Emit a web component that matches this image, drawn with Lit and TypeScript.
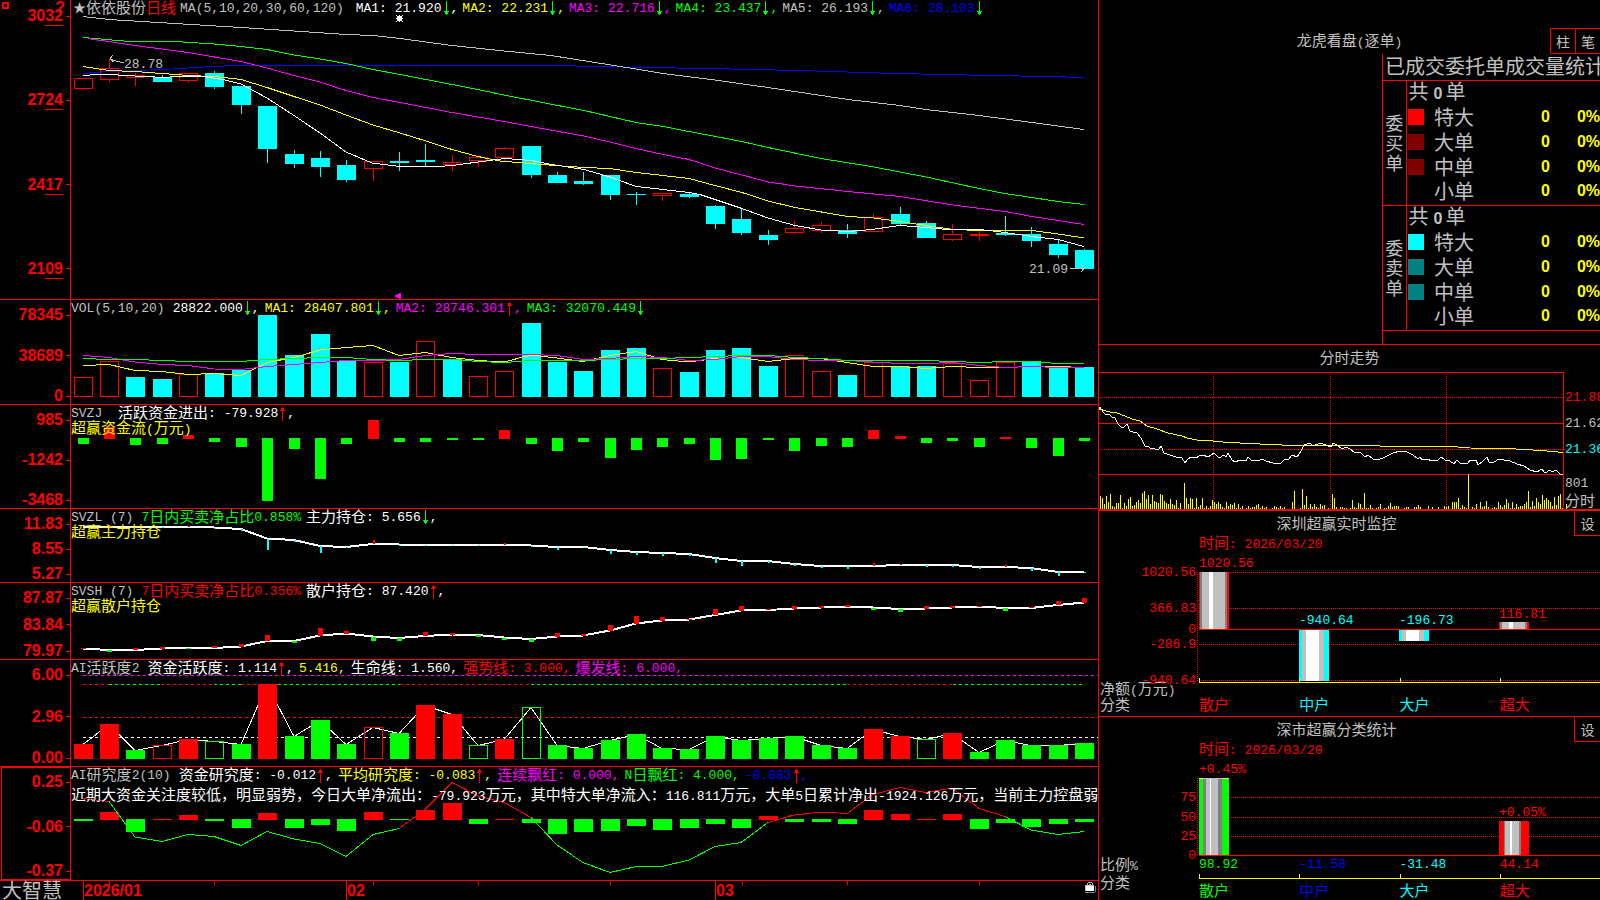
import { LitElement, html, svg, css, nothing } from "lit";
import { customElement } from "lit/decorators.js";

type Pt = [number, number];
type Item = { t: string; c: string; a?: "up" | "down"; end?: string };

const R = "#ff0000";
const G = "#00ff00";
const C = "#00ffff";
const Y = "#ffff00";
const M = "#ff00ff";
const W = "#ffffff";
const S = "#c0c0c0";
const B = "#0000ff";
const D = "#808080";

const cx = (i: number) => Math.floor(83.2 + 26.35 * i);
const span = (ys: number[]): Pt[] => ys.map((y, i) => [cx(i), y]);

/** Sets runs of Chinese text at their own size beside the monospaced figures. */
const mix = (t: string) =>
  t
    .split(/([\u3000-\u9fff\uff00-\uffef]+)/)
    .filter((s) => s)
    .map((s) => (/^[\u3000-\u9fff\uff00-\uffef]/.test(s) ? html`<span class="han">${s}</span>` : s));

const line = (pts: Pt[], color: string, width = 1) =>
  svg`<polyline points=${pts.map((p) => p.join(",")).join(" ")} fill="none" stroke=${color} stroke-width=${width}></polyline>`;
const flat = (pairs: number[]): Pt[] => {
  const out: Pt[] = [];
  for (let i = 0; i < pairs.length; i += 2) out.push([pairs[i], pairs[i + 1]]);
  return out;
};
const rect = (x: number, y: number, w: number, h: number, fill: string) =>
  svg`<rect x=${x} y=${y} width=${w} height=${h} fill=${fill}></rect>`;
const frame = (x: number, y: number, w: number, h: number, color: string) =>
  svg`<rect x=${x + 0.5} y=${y + 0.5} width=${w - 1} height=${Math.max(h - 1, 0.5)} fill="none" stroke=${color}></rect>`;
const seg = (x1: number, y1: number, x2: number, y2: number, color: string, dash = "") =>
  svg`<line x1=${x1} y1=${y1} x2=${x2} y2=${y2} stroke=${color} stroke-dasharray=${dash || nothing}></line>`;
const canvas = (x: number, y: number, w: number, h: number, body: unknown) =>
  html`<svg class="canvas" viewBox="${x} ${y} ${w} ${h}" preserveAspectRatio="none" shape-rendering="crispEdges" aria-hidden="true">${body}</svg>`;

const arrow = (dir: "up" | "down") => html`<svg class="arrow" viewBox="0 0 9 16" shape-rendering="crispEdges" aria-hidden="true">
  ${dir === "up"
    ? svg`<path d="M4 1h1v14h-1z M3 2h3v2h-3z M2 4h5v1h-5z" fill=${R}></path>`
    : svg`<path d="M4 0h1v14h-1z M3 10h3v3h-3z M2 10h5v1h-5z" fill=${G}></path>`}
</svg>`;
const legend = (items: Item[]) =>
  html`<div class="legend">${items.map(
    (i) => html`<span class="item" style="color:${i.c}">${mix(i.t)}${i.a ? arrow(i.a) : nothing}${i.end ?? ""}</span>`
  )}</div>`;

/* Daily candles: [rising, high, body top, body bottom, low] */
const candles: [number, number, number, number, number][] = [
  [1, 78, 78, 89, 90], [1, 59, 68, 80, 82], [1, 73, 75, 78, 86], [0, 75, 77, 82, 82], [1, 73, 73, 81, 83],
  [0, 71, 73, 87, 89], [0, 86, 86, 105, 114], [0, 106, 106, 149, 163], [0, 150, 154, 164, 168], [0, 151, 158, 167, 177],
  [0, 160, 165, 180, 182], [1, 161, 161, 169, 181], [0, 152, 161, 163, 171], [0, 144, 160, 162, 167], [1, 155, 162, 165, 171],
  [1, 155, 157, 161, 167], [1, 147, 148, 158, 162], [0, 146, 146, 175, 178], [0, 172, 175, 183, 183], [0, 172, 181, 184, 185],
  [0, 175, 175, 195, 200], [0, 192, 194, 195, 205], [1, 193, 193, 196, 201], [0, 192, 194, 197, 198], [0, 205, 206, 224, 229],
  [0, 209, 219, 233, 235], [0, 230, 235, 240, 245], [1, 221, 228, 233, 234], [1, 222, 225, 231, 233], [0, 224, 230, 234, 238],
  [1, 214, 217, 232, 232], [0, 207, 214, 224, 225], [0, 221, 223, 238, 238], [1, 224, 234, 240, 241], [1, 230, 234, 236, 241],
  [0, 216, 233, 235, 236], [0, 227, 234, 241, 247], [0, 240, 244, 255, 258], [0, 249, 250, 269, 269],
];
const ma5 = [83, 75.5, 98, 74.5, 109, 74.5, 135, 76, 165, 77.5, 180, 76, 201, 76, 225, 80, 241, 84, 267, 98, 294, 115.5, 320, 133, 346, 152, 372, 163, 400, 166.5, 438, 166.5, 452, 165.5, 478, 162, 505, 158.5, 531, 160.5, 552, 164.5, 584, 169.5, 610, 177, 636, 186.5, 663, 189.5, 689, 192.5, 700, 194.5, 742, 208.5, 768, 218, 795, 225.5, 821, 230, 848, 231.5, 872, 229.5, 900, 225.5, 926, 227.5, 947, 229.5, 980, 229.5, 1005, 232.5, 1032, 236.5, 1058, 239.5, 1084, 246.5];
const ma10 = [83, 66.5, 109, 70.5, 135, 71.5, 162, 73.5, 188, 75.5, 214, 76.5, 241, 79.5, 267, 87.5, 294, 96.5, 320, 105, 346, 115, 373, 125, 400, 133, 426, 141, 452, 149.5, 478, 156.5, 500, 161, 531, 163.5, 555, 165.5, 584, 167.5, 610, 168.5, 636, 172.5, 663, 175.5, 689, 178.5, 715, 185.5, 742, 192.5, 768, 201, 795, 207.5, 848, 216.5, 874, 218, 900, 221.5, 926, 225.5, 953, 229.5, 980, 230.5, 1032, 230.5, 1058, 234, 1084, 238];
const ma20 = [88, 38.5, 135, 45.5, 188, 52.5, 241, 61.5, 267, 68, 294, 75.5, 320, 82, 346, 90.5, 373, 97.5, 400, 102.5, 452, 112.5, 504, 121.5, 550, 130, 584, 136, 610, 142, 636, 148.5, 663, 154.5, 689, 159.5, 715, 168, 742, 175, 768, 182, 795, 186, 848, 191.5, 900, 196.5, 953, 205, 1005, 211.5, 1032, 216.5, 1084, 224.5];
const ma30 = [83, 37.5, 130, 41.5, 175, 41.5, 214, 44, 241, 46.5, 267, 49.5, 294, 55, 320, 59, 346, 63.5, 373, 69.5, 400, 74.5, 426, 79.5, 478, 89.5, 504, 95, 550, 104, 584, 110.5, 636, 122.5, 663, 126.5, 689, 131.5, 742, 141.5, 768, 147.5, 821, 158.5, 874, 167, 926, 177, 979, 188.5, 1005, 193.5, 1058, 201.5, 1084, 204.5];
const ma60 = [83, 16.5, 109, 19.5, 241, 27.5, 346, 34.5, 373, 35.5, 400, 38.5, 452, 45.5, 504, 51, 551, 55.5, 636, 69, 663, 73.5, 715, 80, 768, 87.5, 848, 99.5, 900, 105.5, 926, 109.5, 979, 115.5, 1032, 122.5, 1084, 129.5];
const ma120 = [83, 73.5, 109, 71.5, 162, 69.5, 214, 66.5, 235, 65.5, 551, 65.5, 650, 67.5, 704, 68.5, 755, 69.5, 834, 71.5, 860, 72.5, 940, 74.5, 1047, 76.5, 1084, 77.5];

/* Trading volume: [hollow, top] */
const volume: [number, number][] = [
  [1, 377], [1, 361], [0, 377], [0, 379], [1, 374], [0, 373], [0, 370], [0, 315], [0, 355], [0, 334], [0, 361], [1, 362], [0, 362],
  [1, 341], [0, 359], [1, 376], [1, 371], [0, 323], [0, 362], [0, 371], [0, 350], [0, 348], [1, 368], [0, 372], [0, 350], [0, 348],
  [0, 366], [1, 355], [1, 371], [0, 375], [1, 362], [0, 366], [0, 366], [1, 363], [1, 380], [1, 362], [0, 361], [0, 368], [0, 367],
];
const vol5 = [365.5, 364.5, 370.5, 371.5, 374.5, 373.5, 375.5, 362.5, 357.5, 350, 347.5, 345.5, 355.5, 352.5, 357.5, 360.5, 362, 355, 358, 361.5, 355.5, 351.5, 359.5, 362, 358.5, 357.5, 361.5, 358.5, 358.5, 362.5, 366.5, 366.5, 368.5, 366.5, 367.5, 367.5, 366.5, 366.5, 367.5];
const vol10 = [355.5, 357.5, 362, 364.5, 365.5, 369, 369.5, 366.5, 364.5, 362.5, 360.5, 360.5, 359.5, 355.5, 353.5, 354.5, 354.5, 354.5, 355.5, 359.5, 358.5, 356.5, 357.5, 360.5, 359.5, 356.5, 356.5, 359.5, 360.5, 360.5, 362, 363.5, 363.5, 362.5, 365.5, 367.5, 366.5, 367.5, 367.5];
const vol20 = [358.5, 359.5, 359.5, 360.5, 361.5, 361.5, 361.5, 359.5, 358.5, 357.5, 357.5, 359.5, 360.5, 359.5, 359.5, 361.5, 362.5, 360.5, 360.5, 360.5, 359.5, 358.5, 358.5, 357.5, 356.5, 355.5, 355.5, 357.5, 358.5, 360.5, 360.5, 360.5, 360.5, 361.5, 362.5, 361.5, 361.5, 363.5, 363.5];

/* Capital flow: positive is inflow, in pixels from the zero line */
const flow = [-6, 12, -7, -6, 4, -4, -9, -63, -11, -41, -6, 19, -4, -4, -2, -2, 9, -6, -13, -4, -20, -12, -9, -6, -22, -21, -2, -13, -8, -9, 9, 3, -5, -3, -9, 2, -10, -18, -3];

const mainHold = [527, 527, 527, 527, 527, 527.5, 529, 538.5, 540, 546, 547, 544, 544.5, 545, 545, 545, 545, 545.5, 547, 547, 550, 552, 553, 554, 558, 561, 561, 564, 566, 566, 566, 565, 565, 565, 567, 567, 568, 572, 572];
const mainTick = [0, 2, 0, -1, 1, -1, -2, -11, -2, -7, -1, 4, -1, -1, -1, -1, 2, -1, -3, -1, -4, -3, -3, -2, -5, -5, -2, -2, -2, -3, 3, 1, -2, -2, -2, 2, -3, -4, -1];
const retail = [648.5, 650, 650, 648.5, 648, 648, 646.5, 641, 641, 635.5, 633.5, 636.5, 638, 636, 634.5, 635, 637.5, 639, 636.5, 635.5, 630.5, 623.5, 620.5, 619.5, 615, 610.5, 610, 608.5, 607.5, 606.5, 607.5, 609, 608.5, 607.5, 606.5, 608, 608, 605, 602.5];
const retailTick = [1, -2, 2, 2, -1, 2, 3, 6, -2, 8, 3, -4, -3, 4, 2, -2, -2, -3, 4, 2, 6, 8, 4, 1, 6, 5, 1, 3, 2, 2, -2, -3, 3, 2, 1, -3, 1, 4, 5];

/* Activity: kind (R/G solid, r/g hollow) and top */
const active: [string, number][] = [
  ["R", 744], ["R", 724], ["G", 750], ["r", 745], ["R", 739], ["g", 741], ["G", 744], ["R", 684], ["G", 736], ["G", 720],
  ["G", 744], ["r", 727], ["G", 733], ["R", 705], ["R", 714], ["g", 745], ["R", 739], ["g", 707], ["G", 745], ["G", 748],
  ["G", 740], ["G", 734], ["G", 748], ["G", 749], ["G", 736], ["G", 740], ["G", 738], ["G", 736], ["G", 745], ["G", 748],
  ["R", 729], ["R", 736], ["g", 739], ["R", 733], ["G", 752], ["G", 740], ["G", 745], ["G", 745], ["G", 743],
];
const study = [798.5, 801.5, 837, 841.5, 834.5, 836.5, 845.5, 831.5, 839, 843.5, 856.5, 834.5, 828.5, 809.5, 782.5, 796, 802.5, 817.5, 845, 862.5, 872.5, 866.5, 866.5, 860, 846.5, 842.5, 822.5, 815, 812, 813.5, 794.5, 787.5, 792.5, 788, 808.5, 816.5, 830, 834.5, 831.5];
const studyBars = [-2, 8, -13, 1, 5, -2, -9, 7, -9, -6, -12, 8, -1, 10, 17, -5, 1, -4, -15, -13, -12, -7, -11, -9, -5, -9, 4, -3, -3, -5, 10, 6, 1, 6, -10, -4, -8, -5, -3];

const minuteAvg = [1099, 409, 1110, 412, 1117, 413, 1125, 416, 1132, 419, 1140, 421, 1147, 426, 1157, 429, 1168, 433, 1182, 436, 1187, 438, 1197, 440, 1213, 441, 1223, 442, 1240, 443, 1270, 444.5, 1293, 445.5, 1380, 446, 1452, 446.5, 1470, 448, 1507, 448.5, 1533, 450, 1547, 451, 1563, 452.5];
const minutePrice = [1099, 409, 1100, 407, 1103, 412, 1106, 415, 1109, 414, 1112, 417, 1115, 418, 1118, 424, 1121, 427, 1124, 427, 1127, 424, 1130, 431, 1133, 432, 1137, 433, 1141, 438, 1145, 446, 1149, 447, 1151, 449, 1153, 448, 1157, 450, 1159, 449, 1161, 446, 1164, 453, 1170, 455, 1176, 457, 1182, 458, 1185, 463, 1188, 459, 1191, 457, 1196, 458, 1199, 456, 1203, 455, 1208, 457, 1214, 453, 1219, 458, 1224, 455, 1226, 457, 1228, 453, 1232, 460, 1235, 462, 1240, 460, 1246, 461, 1248, 457, 1251, 460, 1258, 461, 1262, 459, 1266, 461, 1273, 463, 1280, 464, 1284, 460, 1289, 459, 1292, 455, 1297, 457, 1301, 451, 1304, 445, 1307, 444, 1310, 443, 1313, 446, 1320, 443, 1326, 445, 1331, 447, 1333, 443, 1337, 445, 1342, 449, 1346, 447, 1350, 449, 1354, 452, 1361, 453, 1365, 457, 1368, 455, 1373, 459, 1378, 460, 1385, 457, 1393, 453, 1400, 451, 1407, 452, 1413, 455, 1418, 459, 1420, 457, 1422, 460, 1428, 459, 1431, 461, 1438, 460, 1441, 457, 1445, 460, 1450, 461, 1454, 464, 1457, 460, 1461, 464, 1468, 463, 1470, 460, 1476, 460, 1478, 465, 1483, 461, 1487, 457, 1489, 462, 1494, 462, 1499, 459, 1504, 460, 1510, 461, 1517, 464, 1524, 466, 1530, 470, 1537, 472, 1542, 469, 1545, 473, 1550, 470, 1552, 472, 1556, 470, 1560, 474, 1563, 474];
const minuteVol = [13, 11, 5, 13, 7, 15, 3, 2, 6, 6, 14, 1, 6, 3, 10, 12, 3, 4, 7, 9, 6, 16, 18, 10, 14, 5, 14, 8, 7, 6, 15, 14, 8, 6, 5, 10, 5, 4, 9, 1, 6, 0, 26, 11, 5, 11, 10, 1, 11, 2, 4, 11, 1, 3, 1, 3, 9, 7, 5, 7, 5, 2, 1, 7, 3, 5, 4, 6, 1, 5, 1, 3, 0, 1, 3, 1, 2, 2, 4, 5, 1, 3, 1, 2, 0, 0, 1, 3, 2, 1, 3, 1, 2, 0, 0, 0, 7, 18, 0, 0, 1, 20, 4, 13, 1, 5, 2, 5, 2, 1, 5, 3, 4, 0, 1, 0, 15, 11, 2, 0, 2, 2, 1, 1, 0, 1, 9, 2, 1, 6, 5, 1, 16, 1, 1, 4, 1, 0, 1, 2, 5, 0, 1, 1, 3, 6, 2, 3, 3, 3, 0, 0, 1, 2, 2, 0, 0, 2, 2, 4, 2, 0, 0, 0, 3, 0, 2, 0, 0, 2, 0, 0, 3, 2, 3, 0, 7, 7, 7, 11, 1, 4, 2, 1, 35, 0, 2, 1, 5, 0, 7, 2, 3, 8, 2, 0, 1, 2, 1, 7, 4, 2, 4, 10, 6, 1, 7, 1, 5, 2, 3, 3, 5, 7, 18, 2, 8, 3, 11, 7, 5, 14, 9, 11, 9, 7, 3, 12, 4, 13, 15, 1, 0, 5];

/** A shaded column: stripes of [width, colour] from the left edge. */
const column = (x: number, y: number, h: number, stripes: [number, string][]) => {
  let at = x;
  return stripes.map(([w, c]) => {
    const s = rect(at, y, w, h, c);
    at += w;
    return s;
  });
};

type Label = { x: number; y: number; t: string; c: string; right?: boolean };

@customElement("app-root")
export class AppRoot extends LitElement {
  static styles = css`
    :host {
      display: block;
      height: 100vh;
      overflow: hidden;
      background: #000;
      color: #c0c0c0;
      font: 13px/16px "Liberation Mono", "Noto Sans CJK SC", monospace;
      white-space: nowrap;
    }
    * {
      box-sizing: border-box;
    }
    .screen {
      display: grid;
      grid-template-columns: minmax(0, 1098fr) minmax(0, 502fr);
      height: 100%;
    }
    .han {
      font-family: "Noto Sans CJK SC", sans-serif;
      font-size: 15px;
      line-height: 0;
    }
    .charts {
      display: grid;
      grid-template-rows:
        minmax(0, 300fr) minmax(0, 105fr) minmax(0, 104fr) minmax(0, 74fr) minmax(0, 77fr)
        minmax(0, 107fr) minmax(0, 114fr) minmax(0, 19fr);
    }
    .panel {
      display: grid;
      grid-template-columns: 71px minmax(0, 1fr);
      border-bottom: 1px solid #f00;
    }
    .axis {
      position: relative;
      display: flex;
      flex-direction: column;
      justify-content: space-between;
      border-right: 1px solid #f00;
      color: #f00;
      font: bold 16px/16px "Liberation Sans", sans-serif;
      text-align: right;
    }
    .axis.price {
      padding: 8px 0 22px;
    }
    .axis.vol,
    .axis.money,
    .axis.retail,
    .axis.hold,
    .axis.act {
      padding: 7px 0 0;
    }
    .axis.study {
      margin-left: 1px;
      padding: 6px 0 0;
      border: 1px solid #f00;
    }
    .mark {
      display: grid;
      grid-template-columns: 1fr 4px;
      column-gap: 3px;
      align-items: center;
    }
    .mark::after {
      content: "";
      height: 1px;
      background: #f00;
    }
    .price .mark span {
      position: relative;
    }
    .price .mark span::after {
      content: "";
      position: absolute;
      right: 0;
      top: 17px;
      width: 18px;
      height: 1px;
      background: #f00;
    }
    .help {
      position: absolute;
      right: 5px;
      top: 0;
    }
    .box {
      position: absolute;
      left: 2px;
      top: 2px;
      width: 7px;
      height: 7px;
      border: 2px solid #f00;
    }
    .plot {
      position: relative;
      overflow: hidden;
    }
    .canvas {
      position: absolute;
      inset: 0;
      width: 100%;
      height: 100%;
      display: block;
    }
    .legend {
      position: relative;
      display: flex;
      gap: 5px;
      height: 17px;
      padding-top: 1px;
    }
    .legend .item:first-child {
      margin-right: 3px;
    }
    .legend.first {
      gap: 4px;
      padding-left: 2px;
    }
    .legend.first .item:first-child {
      margin-right: 0;
    }
    .legend .han {
      margin-bottom: 4px;
    }
    .item {
      display: inline-flex;
      align-items: center;
      height: 16px;
      white-space: pre;
    }
    .note {
      position: relative;
      color: #ff0;
    }
    .comment {
      position: relative;
      margin-top: 5px;
      color: #fff;
    }
    .arrow {
      width: 9px;
      height: 16px;
    }
    .tag {
      position: absolute;
      line-height: 16px;
      margin-top: -8px;
      white-space: pre;
    }
    .tag.right {
      transform: translateX(-100%);
    }
    .footer {
      display: grid;
      grid-template-columns: 71px minmax(0, 1fr);
    }
    .brand {
      padding-left: 2px;
      font: 20px/18px "Noto Sans CJK SC", sans-serif;
    }
    .dates {
      position: relative;
      color: #f00;
    }
    .date {
      position: absolute;
      top: 2px;
      font: bold 16px/16px "Liberation Sans", sans-serif;
    }
    .lock {
      position: absolute;
      right: 2px;
      top: 0;
      width: 11px;
      height: 12px;
    }
    .side {
      display: grid;
      grid-template-rows: minmax(0, 345fr) minmax(0, 166fr) minmax(0, 206fr) minmax(0, 183fr);
      border-left: 1px solid #f00;
      overflow: hidden;
    }
    .card {
      display: flex;
      flex-direction: column;
      min-width: 0;
      overflow: hidden;
      border-bottom: 1px solid #f00;
    }
    .card:last-child {
      border-bottom: 0;
    }
    .head {
      display: flex;
      height: 25px;
      flex: none;
    }
    .head h2 {
      flex: 1;
      margin: 0;
      text-align: center;
      font: inherit;
      line-height: 30px;
    }
    .tool {
      width: 26px;
      padding: 0;
      border: 1px solid #f00;
      border-top: 0;
      border-right: 0;
      background: #000;
      color: inherit;
      font: 14px/16px "Noto Sans CJK SC", sans-serif;
    }
    .orders {
      padding-top: 28px;
    }
    .orders .head {
      position: relative;
      height: 26px;
    }
    .tools {
      position: absolute;
      right: 0;
      top: 0;
      display: flex;
      height: 26px;
    }
    .tools .tool {
      width: 25px;
      border-top: 1px solid #f00;
    }
    .stats {
      flex: 1;
      align-self: flex-end;
      width: 218px;
      border-left: 1px solid #f00;
      overflow: hidden;
    }
    .stats h3 {
      margin: 0;
      height: 26px;
      padding-left: 2px;
      font: 20px/24px "Noto Sans CJK SC", sans-serif;
    }
    table {
      width: 100%;
      table-layout: fixed;
      border-collapse: collapse;
      font: 20px/20px "Noto Sans CJK SC", sans-serif;
    }
    tbody {
      border-top: 1px solid #f00;
      border-bottom: 1px solid #f00;
    }
    tr {
      height: 25px;
    }
    td,
    th {
      padding: 0 0 3px;
      font-weight: 400;
      text-align: left;
    }
    .kind {
      border-right: 1px solid #f00;
      font-size: 18px;
      line-height: 20px;
      text-align: center;
      white-space: normal;
    }
    .c-kind {
      width: 23px;
    }
    .c-swatch {
      width: 28px;
    }
    .c-num {
      width: 51px;
    }
    .c-pct {
      width: 50px;
    }
    .total {
      padding-left: 2px;
    }
    .total b,
    .num {
      font: bold 16px/16px "Liberation Sans", sans-serif;
    }
    .total b {
      margin: 0 3px 0 5px;
    }
    .num {
      color: #ff0;
      text-align: right;
    }
    .swatch {
      width: 16px;
      height: 16px;
      margin-left: 1px;
    }
    .minute {
      position: relative;
      flex: 1;
    }
    .when {
      height: 16px;
      margin-left: 100px;
      color: #f00;
      line-height: 18px;
      flex: none;
    }
    .bars {
      position: relative;
      flex: 1;
    }
    .cats {
      display: grid;
      grid-template-columns: 100px repeat(4, minmax(0, 1fr));
      flex: none;
    }
    .names {
      display: flex;
      flex-direction: column;
      line-height: 16px;
      padding: 1px 0 0 1px;
    }
    .name {
      padding: 2px 0 0 1px;
    }
    .cat {
      position: relative;
      height: 34px;
      padding-top: 16px;
      border-top: 1px solid #ff0;
    }
    .short .cat {
      height: 22px;
      margin-top: 3px;
      padding-top: 6px;
    }
    .cat::before {
      content: "";
      position: absolute;
      left: 0;
      top: -5px;
      width: 1px;
      height: 4px;
      background: #ff0;
    }
  `;

  private axis(kind: string, values: string[], extra: unknown = nothing) {
    return html`<div class="axis ${kind}">${extra}${values.map((v) => html`<div class="mark"><span>${v}</span></div>`)}</div>`;
  }

  private labels(box: [number, number, number, number], list: Label[]) {
    const [x, y, w, h] = box;
    return list.map(
      (l) => html`<span
        class="tag ${l.right ? "right" : ""}"
        style="left:${((l.x - x) / w) * 100}%;top:${((l.y - y) / h) * 100}%;color:${l.c}"
        >${mix(l.t)}</span
      >`
    );
  }

  private pricePlot() {
    return canvas(71, 0, 1027, 299, [
      candles.map(([up, hi, top, bot, lo], i) => {
        const x = cx(i);
        const h = Math.max(bot - top, 1);
        return up
          ? [
              hi < top ? rect(x, hi, 1, top - hi, R) : nothing,
              lo > bot ? rect(x, bot, 1, lo - bot, R) : nothing,
              h > 2 ? frame(x - 9, top, 19, h, R) : rect(x - 9, top, 19, h, R),
            ]
          : [rect(x, hi, 1, lo - hi, C), rect(x - 9, top, 19, h, C)];
      }),
      line(flat(ma120), B),
      line(flat(ma60), S),
      line(flat(ma30), G),
      line(flat(ma20), M),
      line(flat(ma10), Y),
      line(flat(ma5), W),
      line(flat([124, 63, 116, 61, 110, 59]), S),
      line(flat([113, 55, 110, 59, 114, 62]), S),
      line(flat([1070, 268.5, 1084, 268.5]), S),
      line(flat([1081, 264, 1084, 268.5, 1081, 272]), S),
      svg`<path d="M397 16h5v5h-5z M396 15h1v1h-1z M402 15h1v1h-1z M396 21h1v1h-1z M402 21h1v1h-1z M399 15h1v7h-1z M396 18h7v1h-7z" fill=${W}></path>`,
      svg`<path d="M395 295h2v-1h2v-1h2v6h-2v-1h-2v-1h-2z" fill=${M}></path>`,
    ]);
  }

  private shaded: [number, string][] = [[1, R], [2, D], [7, S], [4, W], [12, S], [2, D], [2, R]];
  private cyanBar: [number, string][] = [[3, C], [4, S], [13, W], [5, S], [5, C]];

  private group(kind: string, colors: string[]) {
    const names = ["特大", "大单", "中单", "小单"];
    return html`<tbody>
      <tr>
        <th class="kind" rowspan="5" scope="rowgroup">${kind}</th>
        <td class="total" colspan="4">共<b>0</b>单</td>
      </tr>
      ${names.map(
        (n, i) => html`<tr>
          <td><div class="swatch" style="background:${colors[i]}"></div></td>
          <td>${n}</td>
          <td class="num">0</td>
          <td class="num">0%</td>
        </tr>`
      )}
    </tbody>`;
  }

  render() {
    const studyParts: [number, number, string][] = [[0, 1, R], [1, 12, G], [12, 17, R], [17, 26, G], [26, 35, R], [35, 38, G]];
    const dashParts: [number, number, string][] = [[83, 109, R], [109, 161, G], [161, 214, R], [214, 241, G], [241, 278, R], [278, 400, G], [400, 531, R], [531, 847, G], [847, 953, R], [953, 1084, G]];
    const minuteBox: [number, number, number, number] = [1099, 370, 501, 140];
    const netBox: [number, number, number, number] = [1099, 552, 501, 130];
    const ratioBox: [number, number, number, number] = [1099, 758, 501, 99];
    return html`<main class="screen">
      <section class="charts">
        <div class="panel">
          ${this.axis("price", ["3032", "2724", "2417", "2109"], html`<i class="box"></i><span class="help">?</span>`)}
          <div class="plot">
            ${this.pricePlot()}
            ${this.labels([71, 0, 1027, 299], [
              { x: 124, y: 65, t: "28.78", c: S },
              { x: 1029, y: 270, t: "21.09", c: S },
            ])}
            <div class="legend first">
              <span class="item">★${mix("依依股份")}<span class="item" style="color:${R}">${mix("日线")}</span></span>
              <span class="item">MA(5,10,20,30,60,120)&nbsp;</span>
              ${[
                ["MA1: 21.920", W], ["MA2: 22.231", Y], ["MA3: 22.716", M], ["MA4: 23.437", G], ["MA5: 26.193", S], ["MA6: 28.103", B],
              ].map(([t, c], i) => html`<span class="item" style="color:${c}">${t}${arrow("down")}${i < 5 ? "," : ""}</span>`)}
            </div>
          </div>
        </div>

        <div class="panel">
          ${this.axis("vol", ["78345", "38689", "0"])}
          <div class="plot">
            ${canvas(71, 300, 1027, 104, [
              volume.map(([hollow, top], i) =>
                hollow ? frame(cx(i) - 9, top, 19, 397 - top, R) : rect(cx(i) - 9, top, 19, 397 - top, C)
              ),
              line(span(vol5), Y),
              line(span(vol10), M),
              line(span(vol20), G),
            ])}
            ${legend([
              { t: "VOL(5,10,20)", c: S },
              { t: "28822.000", c: W, a: "down", end: "," },
              { t: "MA1: 28407.801", c: Y, a: "down", end: "," },
              { t: "MA2: 28746.301", c: M, a: "up", end: "," },
              { t: "MA3: 32070.449", c: G, a: "down" },
            ])}
          </div>
        </div>

        <div class="panel">
          ${this.axis("money", ["985", "-1242", "-3468"])}
          <div class="plot">
            ${canvas(71, 405, 1027, 103, flow.map((v, i) => (v > 0 ? rect(cx(i) - 5, 439 - v, 11, v, R) : rect(cx(i) - 5, 438, 11, -v, G))))}
            ${legend([
              { t: "SVZJ ", c: S },
              { t: "活跃资金进出: -79.928", c: W, a: "up", end: "," },
            ])}
            <div class="note">${mix("超赢资金流(万元)")}</div>
          </div>
        </div>

        <div class="panel">
          ${this.axis("hold", ["11.83", "8.55", "5.27"])}
          <div class="plot">
            ${canvas(71, 509, 1027, 73, [
              line(span(mainHold), W, 2),
              mainTick.map((v, i) => (v > 0 ? rect(cx(i), mainHold[i] - v, 2, v, R) : rect(cx(i), mainHold[i], 2, -v, C))),
            ])}
            ${legend([
              { t: "SVZL (7)", c: S },
              { t: "7日内买卖净占比0.858%", c: G },
              { t: "主力持仓: 5.656", c: W, a: "down", end: "," },
            ])}
            <div class="note">${mix("超赢主力持仓")}</div>
          </div>
        </div>

        <div class="panel">
          ${this.axis("retail", ["87.87", "83.84", "79.97"])}
          <div class="plot">
            ${canvas(71, 583, 1027, 76, [
              line(span(retail), W, 2),
              retailTick.map((v, i) => (v > 0 ? rect(cx(i) - 2, retail[i] - v, 5, v, R) : rect(cx(i) - 2, retail[i], 5, -v, G))),
            ])}
            ${legend([
              { t: "SVSH (7)", c: S },
              { t: "7日内买卖净占比0.356%", c: R },
              { t: "散户持仓: 87.420", c: W, a: "up", end: "," },
            ])}
            <div class="note">${mix("超赢散户持仓")}</div>
          </div>
        </div>

        <div class="panel">
          ${this.axis("act", ["6.00", "2.96", "0.00"])}
          <div class="plot">
            ${canvas(71, 660, 1027, 106, [
              seg(83, 675.5, 1098, 675.5, M, "3 3"),
              dashParts.map(([a, b, c]) => seg(a, 684.5, b, 684.5, c, "3 3")),
              seg(83, 717.5, 1098, 717.5, R, "3 3"),
              seg(83, 737.5, 1098, 737.5, W, "3 3"),
              line(span(active.map(([, y]) => y + 0.5)), W),
              active.map(([k, top], i) => {
                const c = k.toLowerCase() === "r" ? R : G;
                return k === k.toLowerCase() ? frame(cx(i) - 9, top, 19, 759 - top, c) : rect(cx(i) - 9, top, 19, 759 - top, c);
              }),
            ])}
            ${legend([
              { t: "AI活跃度2", c: S },
              { t: "资金活跃度: 1.114", c: W, a: "up", end: "," },
              { t: "5.416,", c: Y },
              { t: "生命线: 1.560,", c: W },
              { t: "强势线: 3.000,", c: R },
              { t: "爆发线: 6.000,", c: M },
            ])}
          </div>
        </div>

        <div class="panel">
          ${this.axis("study", ["0.25", "-0.06", "-0.37"])}
          <div class="plot">
            ${canvas(71, 767, 1027, 113, [
              studyBars.map((v, i) => (v > 0 ? rect(cx(i) - 9, 820 - v, 19, v, R) : rect(cx(i) - 9, 819, 19, -v, G))),
              studyParts.map(([a, b, c]) => line(span(study).slice(a, b + 1), c)),
            ])}
            ${legend([
              { t: "AI研究度2(10)", c: S },
              { t: "资金研究度: -0.012", c: W, a: "up", end: "," },
              { t: "平均研究度: -0.083", c: Y, a: "up", end: "," },
              { t: "连续飘红: 0.000,", c: M },
              { t: "N日飘红: 4.000,", c: G },
              { t: "-0.083", c: B, a: "up", end: "," },
            ])}
            <div class="comment">${mix("近期大资金关注度较低，明显弱势，今日大单净流出：-79.923万元，其中特大单净流入：116.811万元，大单5日累计净出-1924.126万元，当前主力控盘弱")}</div>
          </div>
        </div>

        <div class="footer">
          <div class="brand">大智慧</div>
          <div class="dates">
            ${canvas(71, 881, 1027, 19, [
              [83, 346, 715].map((x) => rect(x, 881, 1, 19, R)),
              [109, 214, 373, 478, 610, 742, 847, 979].map((x) => rect(x, 881, 1, 4, R)),
            ])}
            ${([[84, "2026/01"], [347, "02"], [716, "03"]] as [number, string][]).map(
              ([x, t]) => html`<span class="date" style="left:${((x - 71) / 1027) * 100}%">${t}</span>`
            )}
            <svg class="lock" viewBox="0 0 11 12" shape-rendering="crispEdges" aria-hidden="true">
              <path d="M3 1h4v1h-4z M2 2h1v2h-1z M7 2h1v2h-1z M4 3h2v1h-2z" fill="#c0c0c0"></path>
              <path d="M1 5h8v5h-8z" fill="#fff"></path>
              <path d="M0 4h9v1h-9z M0 5h1v5h-1z" fill="#c0c0c0"></path>
              <path d="M0 11h10v1h-10z M10 5h1v6h-1z" fill="#808080"></path>
            </svg>
          </div>
        </div>
      </section>

      <aside class="side">
        <section class="card orders">
          <div class="head">
            <h2>${mix("龙虎看盘(逐单)")}</h2>
            <div class="tools"><button class="tool">柱</button><button class="tool">笔</button></div>
          </div>
          <div class="stats">
            <h3>已成交委托单成交量统计</h3>
            <table>
              <colgroup>
                <col class="c-kind" />
                <col class="c-swatch" />
                <col />
                <col class="c-num" />
                <col class="c-pct" />
              </colgroup>
              ${this.group("委买单", ["#ff0000", "#800000", "#800000", "#000000"])}
              ${this.group("委卖单", ["#00ffff", "#008080", "#008080", "#000000"])}
            </table>
          </div>
        </section>

        <section class="card">
          <div class="head"><h2>${mix("分时走势")}</h2></div>
          <div class="minute">
            ${canvas(...minuteBox, [
              rect(1099, 372, 465, 1, R),
              rect(1099, 423, 465, 1, R),
              rect(1099, 474, 465, 1, R),
              rect(1563, 372, 1, 138, R),
              rect(1099, 509, 501, 1, R),
              seg(1100, 397.5, 1563, 397.5, R, "1 1"),
              seg(1100, 449.5, 1563, 449.5, R, "1 1"),
              [1213.5, 1330.5, 1446.5].map((x) => seg(x, 374, x, 509, R, "1 1")),
              minuteVol.map((v, i) => (v ? rect(1100 + 2 * i, 509 - v, 1, v, Y) : nothing)),
              line(flat(minuteAvg), Y),
              line(flat(minutePrice), W),
            ])}
            ${this.labels(minuteBox, [
              { x: 1565, y: 398, t: "21.88", c: R },
              { x: 1565, y: 424, t: "21.62", c: S },
              { x: 1565, y: 450, t: "21.36", c: C },
              { x: 1565, y: 484, t: "801", c: S },
              { x: 1565, y: 503, t: "分时", c: S },
            ])}
          </div>
        </section>

        <section class="card">
          <div class="head">
            <h2>${mix("深圳超赢实时监控")}</h2>
            <button class="tool">设</button>
          </div>
          <div class="when">${mix("时间: 2026/03/20")}</div>
          <div class="bars">
            ${canvas(...netBox, [
              [572.5, 608.5, 644.5, 680.5].map((y) => seg(1199, y, 1600, y, R, "1 1")),
              seg(1197.5, 572, 1197.5, 681, R, "1 1"),
              rect(1199, 629, 401, 1, R),
              column(1199, 572, 57, this.shaded),
              column(1299, 630, 51, this.cyanBar),
              column(1399, 630, 11, this.cyanBar),
              column(1499, 622, 7, this.shaded),
            ])}
            ${this.labels(netBox, [
              { x: 1196, y: 573, t: "1020.56", c: R, right: true },
              { x: 1196, y: 609, t: "366.83", c: R, right: true },
              { x: 1196, y: 630, t: "0", c: R, right: true },
              { x: 1196, y: 645, t: "-286.9", c: R, right: true },
              { x: 1196, y: 681, t: "-940.64", c: R, right: true },
              { x: 1199, y: 564, t: "1020.56", c: R },
              { x: 1299, y: 621, t: "-940.64", c: C },
              { x: 1399, y: 621, t: "-196.73", c: C },
              { x: 1499, y: 615, t: "116.81", c: R },
            ])}
          </div>
          <div class="cats">
            <div class="names"><span>${mix("净额(万元)")}</span><span>${mix("分类")}</span></div>
            ${[["散户", R], ["中户", C], ["大户", C], ["超大", R]].map(([t, c]) => html`<div class="cat" style="color:${c}">${mix(t)}</div>`)}
          </div>
        </section>

        <section class="card">
          <div class="head">
            <h2>${mix("深市超赢分类统计")}</h2>
            <button class="tool">设</button>
          </div>
          <div class="when">${mix("时间: 2026/03/20")}</div>
          <div class="bars">
            ${canvas(...ratioBox, [
              [797.5, 817.5, 836.5].map((y) => seg(1199, y, 1600, y, R, "1 1")),
              seg(1197.5, 778, 1197.5, 856, R, "1 1"),
              column(1199, 778, 77, [[4, G], [3, D], [4, S], [1, W], [7, S], [4, D], [7, G]]),
              rect(1199, 778, 4, 1, Y),
              rect(1203, 778, 20, 1, S),
              rect(1223, 778, 6, 1, Y),
              column(1499, 821, 34, [[5, R], [1, D], [5, S], [2, W], [7, S], [2, D], [8, R]]),
              rect(1199, 855, 401, 1, R),
            ])}
            ${this.labels(ratioBox, [
              { x: 1196, y: 798, t: "75", c: R, right: true },
              { x: 1196, y: 818, t: "50", c: R, right: true },
              { x: 1196, y: 837, t: "25", c: R, right: true },
              { x: 1196, y: 856, t: "0", c: R, right: true },
              { x: 1199, y: 770, t: "+0.45%", c: R },
              { x: 1499, y: 813, t: "+0.05%", c: R },
            ])}
          </div>
          <div class="cats short">
            <div class="name">${mix("比例%")}</div>
            ${[["98.92", G], ["-11.58", B], ["-31.48", C], ["44.14", R]].map(([t, c]) => html`<div style="color:${c}">${t}</div>`)}
            <div class="name">${mix("分类")}</div>
            ${[["散户", G], ["中户", B], ["大户", C], ["超大", R]].map(([t, c]) => html`<div class="cat" style="color:${c}">${mix(t)}</div>`)}
          </div>
        </section>
      </aside>
    </main>`;
  }
}
